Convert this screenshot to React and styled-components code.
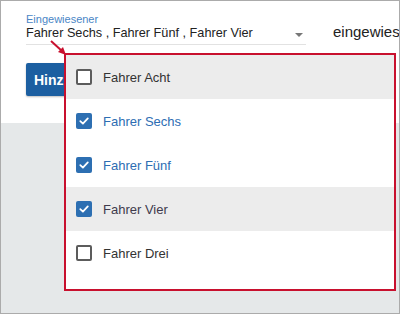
import React, { useState } from "react";
import styled, { createGlobalStyle } from "styled-components";

const GlobalStyle = createGlobalStyle`
  html, body {
    margin: 0;
    padding: 0;
    background: #ffffff;
  }
  body {
    font-family: "Liberation Sans", Arial, sans-serif;
  }
`;

const drivers = [
  { id: 8, name: "Fahrer Acht", checked: false, highlight: true },
  { id: 6, name: "Fahrer Sechs", checked: true, highlight: false },
  { id: 5, name: "Fahrer Fünf", checked: true, highlight: false },
  { id: 4, name: "Fahrer Vier", checked: true, highlight: true },
  { id: 3, name: "Fahrer Drei", checked: false, highlight: false },
];

export default function App() {
  const [items, setItems] = useState(drivers);

  const toggle = (id) => {
    setItems(
      items.map((item) =>
        item.id === id ? { ...item, checked: !item.checked } : item
      )
    );
  };

  const selected = [6, 5, 4]
    .map((id) => items.find((i) => i.id === id))
    .filter((i) => i && i.checked)
    .map((i) => i.name)
    .join(" , ");

  return (
    <Frame>
      <GlobalStyle />
      <Card>
        <TopRow>
          <Field>
            <Label>Eingewiesener</Label>
            <ValueRow>
              <Value>{selected}</Value>
              <Caret />
            </ValueRow>
          </Field>
          <SideText>eingewiesen</SideText>
        </TopRow>
        <AddButton>Hinzufügen</AddButton>
      </Card>

      <Pointer width="20" height="18" viewBox="0 0 20 18">
        <line x1="3" y1="2" x2="14" y2="12" stroke="#c8102e" strokeWidth="2" />
        <polygon points="18,16 10,13 15,8" fill="#c8102e" />
      </Pointer>

      <Menu>
        {items.map((item) => (
          <Option
            key={item.id}
            $highlight={item.highlight}
            onClick={() => toggle(item.id)}
          >
            <Box $checked={item.checked}>
              {item.checked && (
                <svg width="12" height="12" viewBox="0 0 12 12">
                  <path
                    d="M2.3 6.2 L4.9 8.6 L9.8 3.4"
                    fill="none"
                    stroke="#ffffff"
                    strokeWidth="1.8"
                    strokeLinecap="round"
                    strokeLinejoin="round"
                  />
                </svg>
              )}
            </Box>
            <OptionText $checked={item.checked} $highlight={item.highlight}>
              {item.name}
            </OptionText>
          </Option>
        ))}
      </Menu>
    </Frame>
  );
}

const Frame = styled.div`
  position: relative;
  width: 400px;
  height: 314px;
  box-sizing: border-box;
  border: 1px solid #ababab;
  background: #e5e8e9;
  overflow: hidden;
`;

const Card = styled.div`
  background: #ffffff;
  height: 122px;
  box-sizing: border-box;
  padding: 12px 0 0 25px;
`;

const TopRow = styled.div`
  display: flex;
  align-items: flex-start;
`;

const Field = styled.div`
  flex-shrink: 0;
  width: 280px;
  display: flex;
  flex-direction: column;
`;

const Label = styled.div`
  font-size: 11px;
  line-height: 13px;
  color: #4a86c6;
`;

const ValueRow = styled.div`
  display: flex;
  align-items: flex-start;
  justify-content: space-between;
  height: 18px;
  border-bottom: 1px solid #e2e2e2;
`;

const Value = styled.span`
  font-size: 12.7px;
  line-height: 14px;
  color: #222222;
  white-space: nowrap;
`;

const Caret = styled.span`
  align-self: center;
  width: 0;
  height: 0;
  margin-right: 3px;
  border-left: 4px solid transparent;
  border-right: 4px solid transparent;
  border-top: 4px solid #777777;
`;

const SideText = styled.div`
  margin-left: 27px;
  margin-top: 10px;
  font-size: 15px;
  color: #222222;
  white-space: nowrap;
`;

const AddButton = styled.button`
  margin-top: 18px;
  height: 33px;
  padding: 0 8px;
  border: none;
  border-radius: 2px;
  background: #1c5fa1;
  color: #ffffff;
  font-family: "Liberation Sans", Arial, sans-serif;
  font-size: 14px;
  font-weight: bold;
  box-shadow: 0 1px 2px rgba(0, 0, 0, 0.25);
`;

const Pointer = styled.svg`
  position: absolute;
  left: 47px;
  top: 38px;
`;

const Menu = styled.div`
  position: absolute;
  left: 63px;
  top: 52px;
  width: 332px;
  box-sizing: border-box;
  border: 2px solid #c8102e;
  background: #ffffff;
  padding-bottom: 14px;
`;

const Option = styled.div`
  display: flex;
  align-items: center;
  height: 44px;
  padding-left: 10px;
  background: ${(p) => (p.$highlight ? "#ececec" : "#ffffff")};
  cursor: pointer;
`;

const Box = styled.span`
  display: flex;
  align-items: center;
  justify-content: center;
  width: 16px;
  height: 16px;
  box-sizing: border-box;
  border-radius: 2px;
  border: ${(p) => (p.$checked ? "none" : "2px solid #5c5c5c")};
  background: ${(p) => (p.$checked ? "#2d6fb2" : "#ffffff")};
`;

const OptionText = styled.span`
  margin-left: 11px;
  font-size: 13px;
  color: ${(p) =>
    p.$checked && !p.$highlight
      ? "#2d6db3"
      : p.$checked
      ? "#3f3b4d"
      : "#333333"};
`;
